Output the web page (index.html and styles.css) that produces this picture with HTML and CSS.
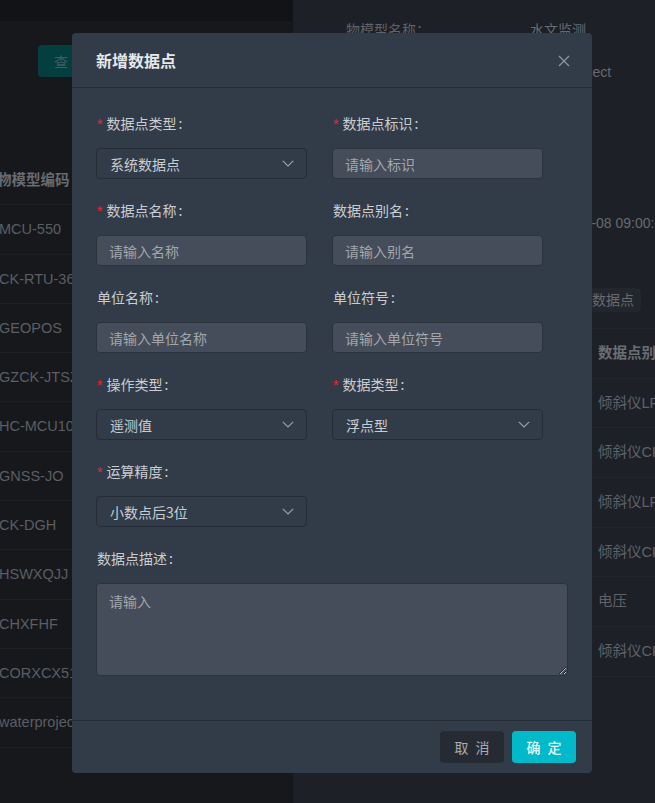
FILE: index.html
```html
<!DOCTYPE html>
<html lang="zh-CN">
<head>
<meta charset="utf-8">
<title>新增数据点</title>
<link rel="stylesheet" href="styles.css">
</head>
<body>
<div class="app">
  <aside class="left">
    <div class="topbar"></div>
    <div class="toolbar"><button class="bg-btn" type="button">查 询</button></div>
    <div class="ltable">
      <div class="lrow lhead">物模型编码</div>
      <div class="lrow">MCU-550</div>
      <div class="lrow">CK-RTU-36</div>
      <div class="lrow">GEOPOS</div>
      <div class="lrow">GZCK-JTSZ</div>
      <div class="lrow">HC-MCU10</div>
      <div class="lrow">GNSS-JO</div>
      <div class="lrow">CK-DGH</div>
      <div class="lrow">HSWXQJJ</div>
      <div class="lrow">CHXFHF</div>
      <div class="lrow">CORXCX51</div>
      <div class="lrow">waterproject</div>
    </div>
  </aside>
  <main class="right">
    <div class="info">
      <div class="info-row"><span class="k">物模型名称：</span><span class="v">水文监测</span></div>
      <div class="info-row"><span class="k">物模型编码：</span><span class="v code">waterproject</span></div>
      <div class="info-row date-row"><span class="k">创建时间：</span><span class="v date">2023-03-08 09:00:00</span></div>
    </div>
    <div class="tabs"><span class="tab">数据点</span></div>
    <div class="rtable">
      <div class="rrow rhead"><span class="rcell">数据点别名</span></div>
      <div class="rrow"><span class="rcell">倾斜仪LP</span></div>
      <div class="rrow"><span class="rcell">倾斜仪CK</span></div>
      <div class="rrow"><span class="rcell">倾斜仪LP</span></div>
      <div class="rrow"><span class="rcell">倾斜仪CK</span></div>
      <div class="rrow"><span class="rcell">电压</span></div>
      <div class="rrow"><span class="rcell">倾斜仪CK</span></div>
    </div>
  </main>
</div>

<div class="modal">
  <div class="modal-header">
    <span class="modal-title">新增数据点</span>
    <span class="close" aria-label="关闭">
      <svg width="12" height="12" viewBox="0 0 12 12"><path d="M1 1 L11 11 M11 1 L1 11" stroke="#8e949c" stroke-width="1.3" fill="none"/></svg>
    </span>
  </div>
  <div class="modal-body">
    <div class="grid">
      <div class="item">
        <label class="label"><span class="req">*</span>数据点类型<span class="colon">:</span></label>
        <div class="select"><span class="sel-text">系统数据点</span><svg class="chev" width="12" height="7" viewBox="0 0 12 7"><polyline points="0.8,0.8 6,6 11.2,0.8" stroke="#99a0a8" stroke-width="1.2" fill="none"/></svg></div>
      </div>
      <div class="item">
        <label class="label"><span class="req">*</span>数据点标识<span class="colon">:</span></label>
        <input class="input" type="text" placeholder="请输入标识">
      </div>
      <div class="item">
        <label class="label"><span class="req">*</span>数据点名称<span class="colon">:</span></label>
        <input class="input" type="text" placeholder="请输入名称">
      </div>
      <div class="item">
        <label class="label">数据点别名<span class="colon">:</span></label>
        <input class="input" type="text" placeholder="请输入别名">
      </div>
      <div class="item">
        <label class="label">单位名称<span class="colon">:</span></label>
        <input class="input" type="text" placeholder="请输入单位名称">
      </div>
      <div class="item">
        <label class="label">单位符号<span class="colon">:</span></label>
        <input class="input" type="text" placeholder="请输入单位符号">
      </div>
      <div class="item">
        <label class="label"><span class="req">*</span>操作类型<span class="colon">:</span></label>
        <div class="select"><span class="sel-text">遥测值</span><svg class="chev" width="12" height="7" viewBox="0 0 12 7"><polyline points="0.8,0.8 6,6 11.2,0.8" stroke="#99a0a8" stroke-width="1.2" fill="none"/></svg></div>
      </div>
      <div class="item">
        <label class="label"><span class="req">*</span>数据类型<span class="colon">:</span></label>
        <div class="select"><span class="sel-text">浮点型</span><svg class="chev" width="12" height="7" viewBox="0 0 12 7"><polyline points="0.8,0.8 6,6 11.2,0.8" stroke="#99a0a8" stroke-width="1.2" fill="none"/></svg></div>
      </div>
      <div class="item">
        <label class="label"><span class="req">*</span>运算精度<span class="colon">:</span></label>
        <div class="select"><span class="sel-text">小数点后3位</span><svg class="chev" width="12" height="7" viewBox="0 0 12 7"><polyline points="0.8,0.8 6,6 11.2,0.8" stroke="#99a0a8" stroke-width="1.2" fill="none"/></svg></div>
      </div>
    </div>
    <div class="item full">
      <label class="label">数据点描述<span class="colon">:</span></label>
      <textarea class="textarea" placeholder="请输入"></textarea>
    </div>
  </div>
  <div class="modal-footer">
    <button class="btn btn-cancel" type="button">取 消</button>
    <button class="btn btn-ok" type="button">确 定</button>
  </div>
</div>
</body>
</html>
```
FILE: styles.css
```css
* { box-sizing: border-box; }
html, body { margin: 0; padding: 0; }
body {
  width: 655px;
  height: 803px;
  overflow: hidden;
  background: #16181c;
  font-family: "Liberation Sans", "Noto Sans CJK SC", sans-serif;
  font-size: 14px;
}

.app {
  display: grid;
  grid-template-columns: 292px 1fr;
  height: 803px;
}

/* ---------- background left ---------- */
.left {
  background: #16181c;
  overflow: hidden;
}
.topbar {
  height: 21px;
  background: #121316;
}
.toolbar {
  padding: 24px 0 0 38px;
  height: 77px;
}
.bg-btn {
  height: 32px;
  width: 64px;
  border: 0;
  border-radius: 4px;
  background: #053e3f;
  color: #3f5f5d;
  font-family: "Liberation Sans", "Noto Sans CJK SC", sans-serif;
  font-size: 14px;
  padding: 0 0 0 16px;
  text-align: left;
}
.ltable {
  margin-top: 58px;
}
.lrow {
  height: 49.3px;
  line-height: 48.3px;
  border-bottom: 1px solid #1e2024;
  color: #5b5e63;
  padding-left: 0;
  white-space: nowrap;
  font-size: 14.5px;
  margin-left: -1px;
}
.lhead {
  color: #686b70;
  font-weight: bold;
  margin-left: -3px;
}

/* ---------- background right ---------- */
.right {
  background: #1d2027;
  overflow: hidden;
  border-left: 1px solid #141519;
}
.info {
  padding-top: 19px;
}
.info-row {
  display: flex;
  height: 22px;
  line-height: 22px;
  margin-bottom: 20px;
  color: #5f6268;
  white-space: nowrap;
}
.info-row .k { width: 238px; padding-left: 53px; flex-shrink: 0; }
.info-row .v { color: #676a70; margin-left: -1px; flex-shrink: 0; }
.info-row .v.code { margin-left: 4px; }
.info-row .v.date { margin-left: 9px; }
.date-row { margin-top: 129px; }
.tabs {
  margin-top: 54px;
  padding-left: 290px;
  height: 40px;
}
.tab {
  display: inline-block;
  height: 24px;
  line-height: 24px;
  padding: 0 7px 0 9px;
  border-radius: 4px;
  background: #23262c;
  color: #676a70;
  white-space: nowrap;
}
.rtable {
  border-top: 1px solid #23262c;
}
.rrow {
  height: 49.7px;
  line-height: 48.7px;
  border-bottom: 1px solid #23262c;
  padding-left: 305px;
  white-space: nowrap;
  color: #5e6167;
  font-size: 14.5px;
}
.rhead {
  color: #6a6d72;
  font-weight: bold;
}

/* ---------- modal ---------- */
.modal {
  position: absolute;
  left: 72px;
  top: 33px;
  width: 520px;
  height: 740px;
  background: #323c49;
  border-radius: 4px;
  display: flex;
  flex-direction: column;
}
.modal-header {
  height: 55px;
  padding: 0 22px 0 24px;
  border-bottom: 1px solid #262d37;
  display: flex;
  align-items: center;
  justify-content: space-between;
  flex-shrink: 0;
}
.modal-title {
  color: #e6e8eb;
  font-size: 16px;
  font-weight: bold;
  font-family: "Noto Sans CJK SC", sans-serif;
  line-height: 22px;
}
.close {
  display: flex;
  width: 12px;
  height: 12px;
  margin-top: 1px;
}
.modal-body {
  padding: 24px 24px 24px 24px;
  flex: 1;
}
.grid {
  display: grid;
  grid-template-columns: 211px 211px;
  column-gap: 25px;
}
.item {
  margin-bottom: 20px;
}
.label {
  display: block;
  height: 22px;
  line-height: 22px;
  margin-bottom: 14px;
  color: #c9cdd2;
  font-size: 14px;
  font-family: "Noto Sans CJK SC", sans-serif;
  white-space: nowrap;
  padding-left: 1px;
}
.req {
  color: #f5222d;
  margin-right: 4px;
  font-family: "Liberation Sans", sans-serif;
  font-size: 14px;
}
.colon {
  margin-left: 2px;
}
.select,
.input {
  display: flex;
  align-items: center;
  width: 211px;
  height: 31px;
  border-radius: 4px;
  padding: 0 12px 0 12px;
  font-size: 14px;
  font-family: "Noto Sans CJK SC", sans-serif;
}
.select {
  justify-content: space-between;
  background: #323c49;
  border: 1px solid #252c36;
  color: #c9cdd2;
}
.sel-text { margin-left: 1px; }
.chev { display: block; }
.input {
  background: #444d59;
  border: 1px solid #2b323c;
  color: #c9cdd2;
  outline: none;
}
.input::placeholder,
.textarea::placeholder {
  color: #a2a7ae;
  opacity: 1;
}
.full .textarea {
  display: block;
  width: 472px;
  height: 93px;
  background: #444d59;
  border: 1px solid #2b323c;
  border-radius: 4px;
  padding: 6px 12px;
  color: #c9cdd2;
  font-size: 14px;
  line-height: 22px;
  font-family: "Noto Sans CJK SC", sans-serif;
  resize: vertical;
  outline: none;
}
.modal-footer {
  height: 53px;
  border-top: 1px solid #262d37;
  padding: 0 16px;
  display: flex;
  align-items: center;
  justify-content: flex-end;
  gap: 8px;
  flex-shrink: 0;
}
.btn {
  width: 64px;
  height: 32px;
  border: 0;
  border-radius: 4px;
  font-size: 14px;
  font-family: "Noto Sans CJK SC", sans-serif;
  letter-spacing: 2px;
  padding: 0 0 0 2px;
}
.btn-cancel {
  background: #262b33;
  color: #a9adb3;
}
.btn-ok {
  background: #00b9c9;
  color: #eaf8f9;
  font-weight: 500;
}
```
